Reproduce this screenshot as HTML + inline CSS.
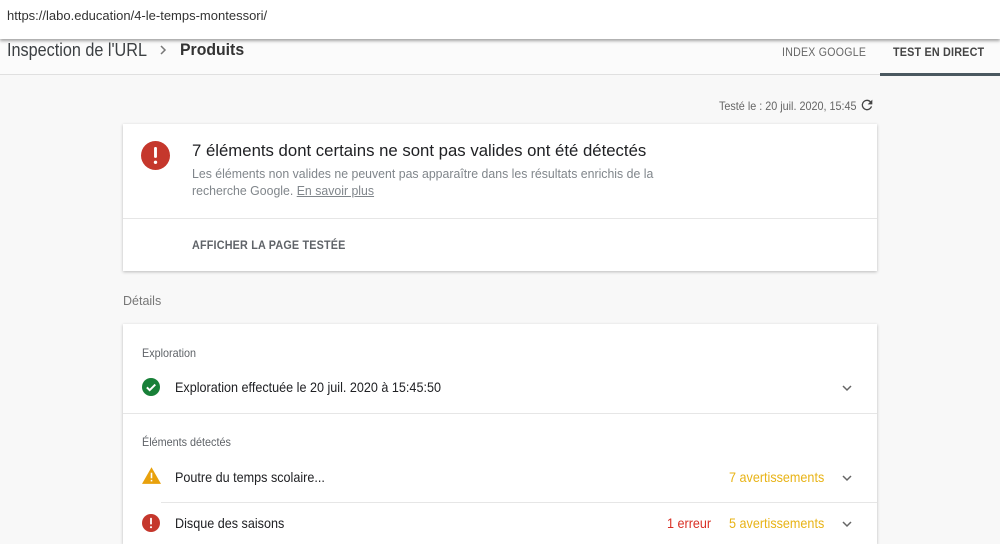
<!DOCTYPE html>
<html><head><meta charset="utf-8"><style>
*{margin:0;padding:0;box-sizing:border-box}
body{width:1000px;height:531px;overflow:hidden;background:#f8f8f8;font-family:"Liberation Sans",sans-serif;position:relative;color:#202124}
.a{position:absolute;white-space:nowrap}
.urlbar{left:0;top:0;width:1000px;height:39px;background:#fff;box-shadow:0 2px 3px rgba(0,0,0,.35);z-index:2}
.card{position:absolute;background:#fff;box-shadow:0 1px 3px rgba(0,0,0,.25)}
.c{transform-origin:left center;transform:scaleX(.9)}
.chev{position:absolute;width:12px;height:8px}
</style></head><body>
<div class="a urlbar"><div class="a" style="left:7px;top:8px;font-size:13px;color:#333">https://labo.education/4-le-temps-montessori/</div></div>
<div class="a" style="left:0;top:39px;width:1000px;height:36px;background:#fbfbfb;border-bottom:1px solid #e0e0e0"></div>
<div class="a" style="left:7px;top:40px;font-size:18px;color:#3c4043;transform-origin:left center;transform:scaleX(.9)">Inspection de l'URL</div>
<svg class="a" style="left:159px;top:44px" width="8" height="12" viewBox="0 0 8 12"><path d="M2 2l4 4-4 4" stroke="#777" stroke-width="1.5" fill="none"/></svg>
<div class="a" style="left:180px;top:40px;font-size:17px;font-weight:bold;color:#333;transform-origin:left center;transform:scaleX(.93)">Produits</div>
<div class="a" style="left:782px;top:45px;font-size:12px;color:#666;letter-spacing:.3px;transform-origin:left center;transform:scaleX(.88)">INDEX GOOGLE</div>
<div class="a" style="left:893px;top:45px;font-size:12px;color:#444;font-weight:bold;letter-spacing:.2px;transform-origin:left center;transform:scaleX(.9)">TEST EN DIRECT</div>
<div class="a" style="left:880px;top:73px;width:120px;height:3px;background:#4a5860"></div>
<div class="a c" style="left:719px;top:99px;font-size:12px;color:#666">Testé le : 20 juil. 2020, 15:45</div>
<svg class="a" style="left:859px;top:97px" width="16" height="16" viewBox="0 0 24 24"><path d="M17.65 6.35A7.96 7.96 0 0 0 12 4a8 8 0 1 0 7.73 10h-2.08A6 6 0 1 1 12 6c1.66 0 3.14.69 4.22 1.78L13 11h7V4z" fill="#444"/></svg>

<div class="card" style="left:123px;top:124px;width:754px;height:147px">
<svg class="a" style="left:18px;top:17px" width="29" height="29" viewBox="0 0 24 24"><circle cx="12" cy="12" r="12" fill="#c5372c"/><rect x="10.8" y="5" width="2.4" height="9" rx="1" fill="#fff"/><circle cx="12" cy="17.6" r="1.4" fill="#fff"/></svg>
<div class="a" style="left:69px;top:17px;font-size:17px;color:#202124;transform-origin:left center;transform:scaleX(.985)">7 éléments dont certains ne sont pas valides ont été détectés</div>
<div class="a" style="left:69px;top:42px;font-size:12.5px;color:#80868b;line-height:17px;transform-origin:left top;transform:scaleX(.985)">Les éléments non valides ne peuvent pas apparaître dans les résultats enrichis de la<br>recherche Google. <span style="text-decoration:underline">En savoir plus</span></div>
<div class="a" style="left:0;top:94px;width:754px;height:1px;background:#e6e6e6"></div>
<div class="a" style="left:69px;top:114px;font-size:12px;font-weight:bold;color:#5f6368;letter-spacing:.2px;transform-origin:left center;transform:scaleX(.9)">AFFICHER LA PAGE TESTÉE</div>
</div>

<div class="a" style="left:123px;top:294px;font-size:12.5px;color:#777">Détails</div>

<div class="card" style="left:123px;top:324px;width:754px;height:220px">
<div class="a c" style="left:19px;top:22px;font-size:12px;color:#5f6368">Exploration</div>
<svg class="a" style="left:19px;top:54px" width="18" height="18" viewBox="0 0 24 24"><circle cx="12" cy="12" r="12" fill="#188038"/><path d="M6.5 12.5l3.7 3.7 7.5-7.5" stroke="#fff" stroke-width="2.6" fill="none"/></svg>
<div class="a c" style="left:52px;top:55px;font-size:14px;color:#202124">Exploration effectuée le 20 juil. 2020 à 15:45:50</div>
<svg class="chev" style="left:718px;top:60px" viewBox="0 0 12 8"><path d="M2 2l4 4 4-4" stroke="#666" stroke-width="1.5" fill="none"/></svg>
<div class="a" style="left:0;top:89px;width:754px;height:1px;background:#e6e6e6"></div>
<div class="a c" style="left:19px;top:111px;font-size:12px;color:#5f6368">Éléments détectés</div>
<svg class="a" style="left:19px;top:143px" width="19" height="17" viewBox="0 0 24 21"><path d="M12 0L24 21H0z" fill="#e8a10c"/><rect x="11" y="7" width="2" height="7" fill="#fff"/><rect x="11" y="16" width="2" height="2" fill="#fff"/></svg>
<div class="a c" style="left:52px;top:145px;font-size:14px;color:#202124">Poutre du temps scolaire...</div>
<div class="a c" style="left:606px;top:145px;font-size:14px;color:#e8b316">7 avertissements</div>
<svg class="chev" style="left:718px;top:150px" viewBox="0 0 12 8"><path d="M2 2l4 4 4-4" stroke="#666" stroke-width="1.5" fill="none"/></svg>
<div class="a" style="left:38px;top:178px;width:716px;height:1px;background:#e6e6e6"></div>
<svg class="a" style="left:19px;top:190px" width="18" height="18" viewBox="0 0 24 24"><circle cx="12" cy="12" r="12" fill="#c5372c"/><rect x="10.8" y="5" width="2.4" height="9" rx="1" fill="#fff"/><circle cx="12" cy="17.6" r="1.4" fill="#fff"/></svg>
<div class="a c" style="left:52px;top:191px;font-size:14px;color:#202124">Disque des saisons</div>
<div class="a c" style="left:544px;top:191px;font-size:14px;color:#d93025">1 erreur</div>
<div class="a c" style="left:606px;top:191px;font-size:14px;color:#e8b316">5 avertissements</div>
<svg class="chev" style="left:718px;top:196px" viewBox="0 0 12 8"><path d="M2 2l4 4 4-4" stroke="#666" stroke-width="1.5" fill="none"/></svg>
</div>
</body></html>
